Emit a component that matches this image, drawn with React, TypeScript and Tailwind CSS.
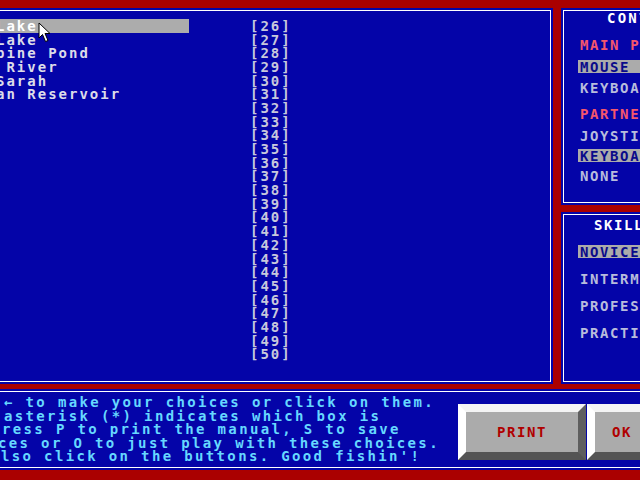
import React from "react";

const names = ["Lake", "Lake", "pine Pond", " River", "Sarah", "an Reservoir"];

function Label({
  text,
  kind,
  mt,
}: {
  text: string;
  kind: "head" | "hi" | "norm";
  mt: string;
}) {
  if (kind === "hi") {
    return (
      <div className={`${mt} ml-[14px] w-[110px] h-[13px] bg-[#ababab] pl-[2px] flex items-center text-[#0a0a8a] leading-none`}>
        {text}
      </div>
    );
  }
  if (kind === "head") {
    return (
      <div className={`${mt} pl-[16px] h-[13px] flex items-center text-[#f4566c] leading-none`}>{text}</div>
    );
  }
  return (
    <div className={`${mt} pl-[16px] h-[13px] flex items-center text-[#b8bcdc] leading-none`}>{text}</div>
  );
}

export default function App() {
  const rows = Array.from({ length: 25 }, (_, i) => i + 26);
  return (
    <div className="w-[640px] h-[480px] overflow-hidden bg-[#aa0000] pt-[8px] font-['DejaVu_Sans_Mono','Liberation_Mono',monospace] font-bold text-[14px]">
      {/* upper area */}
      <div className="flex h-[376px] w-[760px] gap-[8px]">
        {/* main list panel */}
        <div className="w-[553px] shrink-0 bg-[#0404a8] pt-[2px] pr-[2px] pb-[2px]">
          <div className="relative h-full border-t border-r border-b border-white overflow-hidden pt-[8px] tracking-[2px]">
            {rows.map((n, i) => (
              <div key={n} className="flex h-[13.7px] items-center">
                <div
                  className={
                    i === 0
                      ? "w-[189px] h-[13.5px] flex items-center bg-[#acacac] text-white"
                      : "w-[189px] h-[13.5px] flex items-center text-[#dcdce8]"
                  }
                >
                  <span className="ml-[-4px] whitespace-pre leading-none">{names[i] ?? ""}</span>
                </div>
                <div className="ml-[61px] text-[#c8c8dc] leading-none">[{n}]</div>
              </div>
            ))}
            {/* mouse cursor */}
            <svg
              className="absolute left-[38px] top-[11px]"
              width="13"
              height="21"
              viewBox="0 0 13 21"
            >
              <path
                d="M1 1 L1 16 L4.5 12.5 L7.5 19.5 L10 18.5 L7 11.5 L12 11.5 Z"
                fill="white"
                stroke="black"
                strokeWidth="1"
              />
            </svg>
          </div>
        </div>

        {/* right column */}
        <div className="w-[150px] shrink-0 flex flex-col gap-[7px] tracking-[1.6px]">
          <div className="h-[197px] bg-[#0404a8] p-[2px]">
            <div className="h-full border border-white">
              <div className="h-[14px] pl-[43px] flex items-center text-white leading-none tracking-[2.2px]">CONTROLS</div>
              <Label text="MAIN PLAYER" kind="head" mt="mt-[13px]" />
              <Label text="MOUSE" kind="hi" mt="mt-[9px]" />
              <Label text="KEYBOARD" kind="norm" mt="mt-[8px]" />
              <Label text="PARTNER" kind="head" mt="mt-[13px]" />
              <Label text="JOYSTICK" kind="norm" mt="mt-[9px]" />
              <Label text="KEYBOARD" kind="hi" mt="mt-[7px]" />
              <Label text="NONE" kind="norm" mt="mt-[7px]" />
            </div>
          </div>
          <div className="flex-1 bg-[#0404a8] p-[2px]">
            <div className="h-full border border-white pt-[3px]">
              <div className="h-[14px] pl-[30px] flex items-center text-white leading-none">SKILL LEVEL</div>
              <Label text="NOVICE" kind="hi" mt="mt-[13px]" />
              <Label text="INTERMEDIATE" kind="norm" mt="mt-[14px]" />
              <Label text="PROFESSIONAL" kind="norm" mt="mt-[14px]" />
              <Label text="PRACTICE" kind="norm" mt="mt-[14px]" />
            </div>
          </div>
        </div>
      </div>

      {/* bottom panel */}
      <div className="mt-[5px] h-[81px] w-[760px] bg-[#0404a8] py-[2px]">
        <div className="h-full border-t border-b border-white flex">
          <div className="w-[458px] shrink-0 overflow-hidden pt-[4px] text-[#66d8ff] tracking-[2.35px] leading-[13.5px] whitespace-pre">
            <div className="ml-[4px]">← to make your choices or click on them.</div>
            <div className="ml-[4px]">asterisk (*) indicates which box is</div>
            <div className="ml-[2px]">ress P to print the manual, S to save</div>
            <div className="ml-[-2px]">ces or O to just play with these choices.</div>
            <div className="ml-[1px]">lso click on the buttons. Good fishin'!</div>
          </div>
          <div className="flex gap-[1px] mt-[12px]">
            <div className="w-[128px] h-[56px] border-[8px] border-t-[#f4f4f4] border-l-white border-r-[#5e5e5e] border-b-[#545454] bg-[#ababab] flex items-center justify-center text-[#b00000] tracking-[1.6px] leading-none">
              PRINT
            </div>
            <div className="w-[128px] h-[56px] border-[8px] border-t-[#f4f4f4] border-l-white border-r-[#5e5e5e] border-b-[#545454] bg-[#ababab] flex items-center pl-[17px] text-[#b00000] tracking-[1.6px] leading-none">
              OK
            </div>
          </div>
        </div>
      </div>
    </div>
  );
}
